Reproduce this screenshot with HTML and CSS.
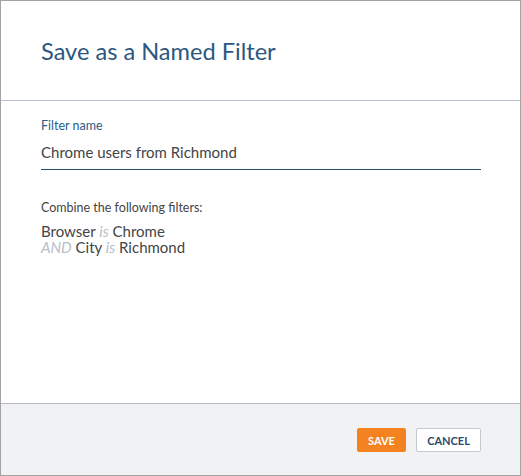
FILE: index.html
```html
<!DOCTYPE html>
<html>
<head>
<meta charset="utf-8">
<link rel="stylesheet" href="styles.css">
</head>
<body>
<div class="dialog">
  <div class="header">
    <h1 class="title">Save as a Named Filter</h1>
  </div>
  <div class="content">
    <div class="field">
      <div class="label">Filter name</div>
      <div class="input">Chrome users from Richmond</div>
    </div>
    <div class="combine">Combine the following filters:</div>
    <div class="filters">
      <div class="row">Browser <span class="op">is</span> Chrome</div>
      <div class="row"><span class="op">AND</span> City <span class="op">is</span> Richmond</div>
    </div>
  </div>
  <div class="footer">
    <button class="btn btn-save">SAVE</button>
    <button class="btn btn-cancel">CANCEL</button>
  </div>
</div>
</body>
</html>
```
FILE: styles.css
```css
html, body {
  margin: 0;
  padding: 0;
  background: #ffffff;
}
body {
  font-family: Lato, "Open Sans", sans-serif;
}
.dialog {
  width: 521px;
  height: 476px;
  box-sizing: border-box;
  border: 1px solid #a3a3a3;
  display: flex;
  flex-direction: column;
  background: #ffffff;
}
.header {
  flex: none;
  height: 100px;
  box-sizing: border-box;
  border-bottom: 1px solid #b9c3cd;
  padding: 36px 40px 0;
}
.title {
  margin: 0;
  font-size: 23.6px;
  font-weight: 400;
  line-height: 28px;
  color: #2b5780;
}
.content {
  flex: 1;
  padding: 17px 39px 0 40px;
}
.field {
  display: flex;
  flex-direction: column;
}
.label {
  font-size: 12.5px;
  line-height: 16px;
  color: #2d5c88;
}
.input {
  margin-top: 8px;
  font-size: 15px;
  line-height: 20px;
  color: #444444;
  padding-bottom: 7px;
  border-bottom: 1px solid #2c4a6c;
}
.combine {
  margin-top: 30px;
  font-size: 12.5px;
  line-height: 16px;
  color: #444444;
}
.filters {
  margin-top: 7px;
}
.row {
  font-size: 15px;
  line-height: 16px;
  color: #444444;
}
.op {
  font-style: italic;
  color: #b7c0cb;
}
.footer {
  flex: none;
  height: 72px;
  box-sizing: border-box;
  border-top: 1px solid #b9bcc1;
  background: #f1f2f4;
  display: flex;
  justify-content: flex-end;
  align-items: flex-start;
  gap: 10px;
  padding: 24px 39px 0 0;
}
.btn {
  height: 24px;
  box-sizing: border-box;
  font-family: Lato, "Open Sans", sans-serif;
  font-size: 11px;
  font-weight: 700;
  padding: 0;
  border-radius: 2px;
  cursor: pointer;
}
.btn-save {
  width: 49px;
  background: #f58220;
  color: #ffffff;
  border: 1px solid #f58220;
}
.btn-cancel {
  width: 65px;
  background: #ffffff;
  color: #2c4a6c;
  border: 1px solid #c3cad2;
}
```
